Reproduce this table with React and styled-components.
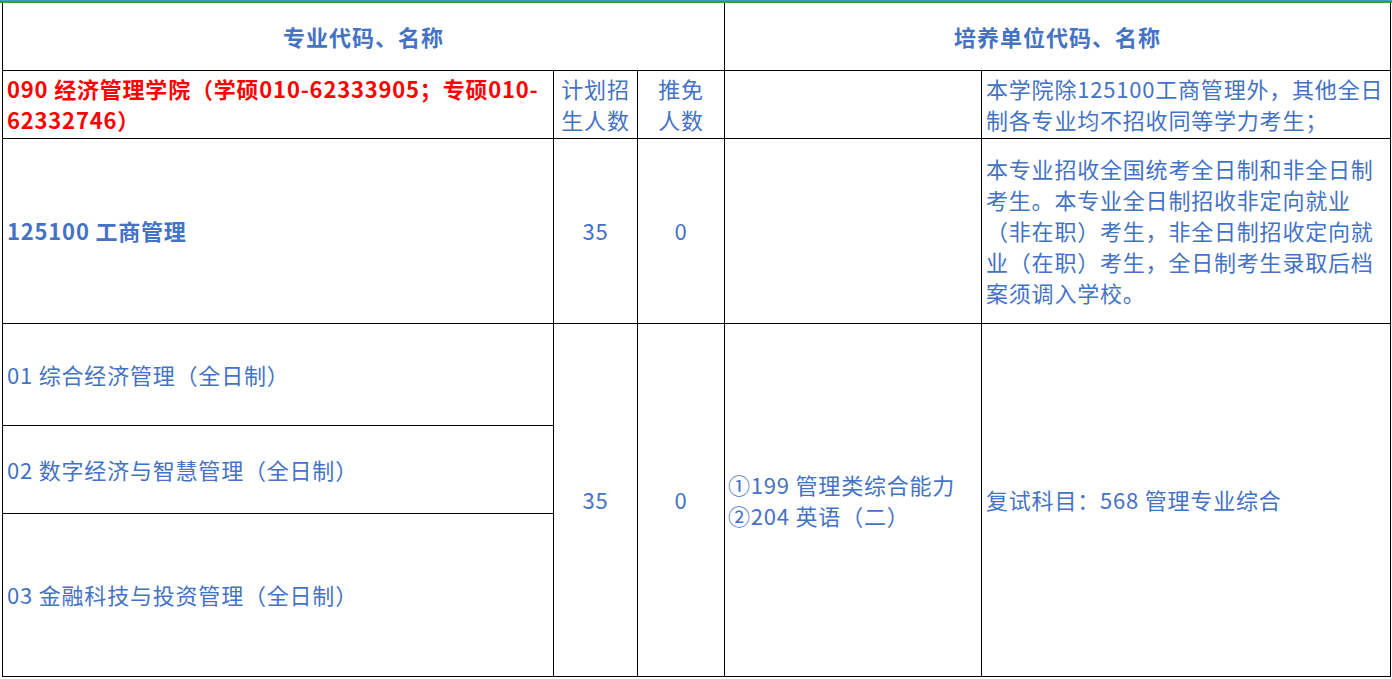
import styled, { createGlobalStyle } from 'styled-components'

const GlobalStyle = createGlobalStyle`
  html, body {
    margin: 0;
    padding: 0;
    background: #ffffff;
  }
  body {
    font-family: "Noto Sans CJK SC", "Noto Sans", sans-serif;
  }
`

const Page = styled.div`
  width: 1392px;
  height: 679px;
  overflow: hidden;
  border-top: 1px solid #3aa0c4;
`

const TopBar = styled.div`
  height: 2px;
  background: #2fa23a;
`

const Sheet = styled.table`
  margin-left: 2px;
  border-collapse: collapse;
  table-layout: fixed;
  width: 1388px;
  color: #4472c4;
  font-size: 22px;
  line-height: 31px;
`

const Cell = styled.td`
  border: 1px solid #000;
  padding: 0 ${p => (p.$pad != null ? p.$pad : 4)}px;
  text-align: ${p => p.$align || 'left'};
  vertical-align: middle;
  font-weight: ${p => (p.$bold ? 700 : 400)};
  color: ${p => (p.$red ? '#ff0000' : 'inherit')};
  letter-spacing: ${p => (p.$ls != null ? p.$ls : 0.8)}px;
`

const Head = styled(Cell)`
  font-weight: 700;
  text-align: center;
  border-top: none;
`

const Row = styled.tr`
  height: ${p => p.$h}px;
`

const subjects = [
  { name: '01 综合经济管理（全日制）', h: 102 },
  { name: '02 数字经济与智慧管理（全日制）', h: 88 },
  { name: '03 金融科技与投资管理（全日制）', h: 163 },
]

export default function App() {
  return (
    <>
      <GlobalStyle />
      <Page>
        <TopBar />
        <Sheet>
          <colgroup>
            <col style={{ width: 551 }} />
            <col style={{ width: 84 }} />
            <col style={{ width: 87 }} />
            <col style={{ width: 257 }} />
            <col style={{ width: 409 }} />
          </colgroup>
          <tbody>
            <Row $h={67}>
              <Head colSpan={3} $ls={1}>专业代码、名称</Head>
              <Head colSpan={2} $ls={1}>培养单位代码、名称</Head>
            </Row>
            <Row $h={68}>
              <Cell $red $bold $ls={0.8}>
                090 经济管理学院（学硕010-62333905；专硕010-62332746）
              </Cell>
              <Cell $align="center" $pad={2}>计划招生人数</Cell>
              <Cell $align="center" $pad={16}>推免人数</Cell>
              <Cell />
              <Cell>本学院除125100工商管理外，其他全日制各专业均不招收同等学力考生；</Cell>
            </Row>
            <Row $h={185}>
              <Cell $bold>125100 工商管理</Cell>
              <Cell $align="center">35</Cell>
              <Cell $align="center">0</Cell>
              <Cell />
              <Cell>本专业招收全国统考全日制和非全日制考生。本专业全日制招收非定向就业（非在职）考生，非全日制招收定向就业（在职）考生，全日制考生录取后档案须调入学校。</Cell>
            </Row>
            {subjects.map((s, i) => (
              <Row key={s.name} $h={s.h}>
                <Cell>{s.name}</Cell>
                {i === 0 && (
                  <>
                    <Cell rowSpan={3} $align="center">35</Cell>
                    <Cell rowSpan={3} $align="center">0</Cell>
                    <Cell rowSpan={3} $pad={3}>
                      ①199 管理类综合能力
                      <br />
                      ②204 英语（二）
                    </Cell>
                    <Cell rowSpan={3}>复试科目：568 管理专业综合</Cell>
                  </>
                )}
              </Row>
            ))}
          </tbody>
        </Sheet>
      </Page>
    </>
  )
}
